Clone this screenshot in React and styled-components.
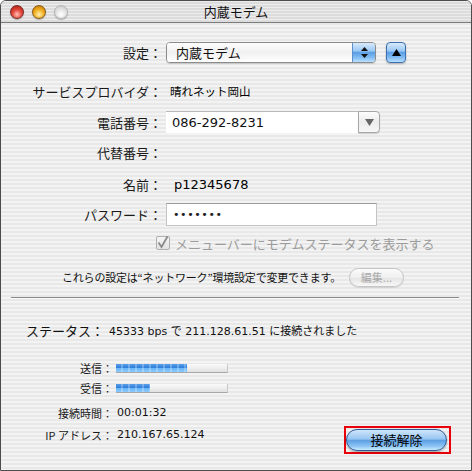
import React from 'react';
import styled, { createGlobalStyle } from 'styled-components';

const GlobalStyle = createGlobalStyle`
  html, body {
    margin: 0;
    padding: 0;
    background: #fff;
  }
  body {
    font-family: "Noto Sans CJK JP", "Noto Sans", sans-serif;
    color: #111;
  }
`;

const pinstripe = `repeating-linear-gradient(to bottom, #f3f3f3 0px, #f3f3f3 2px, #e8e8e8 2px, #e8e8e8 4px)`;

const LATIN = `"DejaVu Sans", "Noto Sans CJK JP", sans-serif`;

const aquaBlue = `linear-gradient(to bottom, #d8eafc 0%, #9ac8f4 42%, #5d9fe6 50%, #7fbaf2 75%, #b9e0ff 100%)`;

const traffic = {
  red: { light: '#ffc2b8', mid: '#e5483c', dark: '#9c1a10', ring: '#7b2a22' },
  yellow: { light: '#fff0b8', mid: '#f3b224', dark: '#b86c00', ring: '#8a5a14' },
  gray: { light: '#ffffff', mid: '#e6e6e6', dark: '#c2c2c2', ring: '#b4b4b4' },
};

const sending = [
  { label: '送信：', value: 64 },
  { label: '受信：', value: 31 },
];

function App() {
  return (
    <>
      <GlobalStyle />
      <Window>
        <TitleBar>
          <Lights>
            <Light $c="red" />
            <Light $c="yellow" />
            <Light $c="gray" />
          </Lights>
          <Title>内蔵モデム</Title>
          <span />
        </TitleBar>

        <Body>
          <FormRow $gap={18}>
            <Label>設定：</Label>
            <Field>
              <Popup>
                <PopupText>内蔵モデム</PopupText>
                <PopupArrows>
                  <svg width="7" height="11" viewBox="0 0 7 11">
                    <path d="M3.5 0 L7 4 L0 4 Z" fill="#111" />
                    <path d="M0 7 L7 7 L3.5 11 Z" fill="#111" />
                  </svg>
                </PopupArrows>
              </Popup>
              <UpButton>
                <svg width="9" height="7" viewBox="0 0 9 7">
                  <path d="M4.5 0 L9 7 L0 7 Z" fill="#000" />
                </svg>
              </UpButton>
            </Field>
          </FormRow>

          <FormRow $gap={17}>
            <Label>サービスプロバイダ：</Label>
            <Value $pad={4} $size={11.5}>晴れネット岡山</Value>
          </FormRow>

          <FormRow $gap={9}>
            <Label>電話番号：</Label>
            <Field>
              <Combo>
                <ComboText>086-292-8231</ComboText>
                <ComboButton>
                  <svg width="9" height="7" viewBox="0 0 9 7">
                    <path d="M0 0 L9 0 L4.5 7 Z" fill="#666" />
                  </svg>
                </ComboButton>
              </Combo>
            </Field>
          </FormRow>

          <FormRow $gap={8}>
            <Label>代替番号：</Label>
            <span />
          </FormRow>

          <FormRow $gap={10}>
            <Label>名前：</Label>
            <Value $pad={8} $size={13} $latin>p12345678</Value>
          </FormRow>

          <FormRow $gap={8}>
            <Label>パスワード：</Label>
            <Field>
              <TextField>•••••••</TextField>
            </Field>
          </FormRow>

          <CheckRow>
            <CheckBox>
              <svg width="12" height="13" viewBox="0 0 12 13">
                <path d="M1.5 6.5 L4.5 11 L10.5 0.5" stroke="#8a8a8a" strokeWidth="1.8" fill="none" />
              </svg>
            </CheckBox>
            <CheckText>メニューバーにモデムステータスを表示する</CheckText>
          </CheckRow>

          <NoteRow>
            <Note>これらの設定は“ネットワーク”環境設定で変更できます。</Note>
            <EditButton>編集...</EditButton>
          </NoteRow>

          <Separator />

          <StatusRow>
            <StatusLabel>ステータス：</StatusLabel>
            <StatusText>45333 bps で 211.128.61.51 に接続されました</StatusText>
          </StatusRow>

          {sending.map((s, i) => (
            <InfoRow key={s.label} $gap={i === 0 ? 17 : 0}>
              <InfoLabel>{s.label}</InfoLabel>
              <Bar>
                <BarFill style={{ width: `${s.value}%` }} />
              </Bar>
            </InfoRow>
          ))}

          <InfoRow $gap={5}>
            <InfoLabel>接続時間：</InfoLabel>
            <InfoValue>00:01:32</InfoValue>
          </InfoRow>

          <InfoRow $gap={2}>
            <InfoLabel>IP アドレス：</InfoLabel>
            <InfoValue>210.167.65.124</InfoValue>
            <Highlight>
              <AquaButton>接続解除</AquaButton>
            </Highlight>
          </InfoRow>
        </Body>
      </Window>
    </>
  );
}

const Window = styled.div`
  width: 472px;
  height: 471px;
  box-sizing: border-box;
  border: 1px solid #4c4c4c;
  border-radius: 6px 6px 0 0;
  overflow: hidden;
  display: flex;
  flex-direction: column;
  background: ${pinstripe};
`;

const TitleBar = styled.div`
  height: 21px;
  border-bottom: 1px solid #7c7c7c;
  display: grid;
  grid-template-columns: 1fr auto 1fr;
  align-items: center;
  background: repeating-linear-gradient(to bottom, #ededed 0px, #ededed 1px, #dcdcdc 1px, #dcdcdc 3px);
`;

const Lights = styled.div`
  display: flex;
  gap: 8px;
  padding-left: 9px;
`;

const Light = styled.div`
  width: 14px;
  height: 14px;
  box-sizing: border-box;
  border-radius: 50%;
  border: 1px solid ${(p) => traffic[p.$c].ring};
  background: radial-gradient(circle at 50% 70%, ${(p) => traffic[p.$c].light} 0%, ${(p) => traffic[p.$c].mid} 45%, ${(p) => traffic[p.$c].dark} 100%);
  box-shadow: 0 1px 1px rgba(0, 0, 0, 0.25);
`;

const Title = styled.div`
  font-size: 13px;
  color: #111;
  line-height: 21px;
`;

const Body = styled.div`
  flex: 1;
  display: flex;
  flex-direction: column;
`;

const FormRow = styled.div`
  display: grid;
  grid-template-columns: 161px 1fr;
  column-gap: 4px;
  align-items: center;
  height: 22px;
  margin-top: ${(p) => p.$gap || 0}px;
`;

const Label = styled.div`
  text-align: right;
  font-size: 13px;
  white-space: nowrap;
  color: #1a1a1a;
`;

const Value = styled.div`
  padding-left: ${(p) => p.$pad}px;
  font-size: ${(p) => p.$size}px;
  font-family: ${(p) => (p.$latin ? LATIN : 'inherit')};
  color: #000;
`;

const Field = styled.div`
  display: flex;
  align-items: center;
`;

const Popup = styled.div`
  width: 210px;
  height: 21px;
  box-sizing: border-box;
  display: flex;
  border: 1px solid #8c8c8c;
  border-radius: 4px;
  overflow: hidden;
  box-shadow: 0 1px 1px rgba(0, 0, 0, 0.15);
`;

const PopupText = styled.div`
  flex: 1;
  padding-left: 9px;
  font-size: 13px;
  line-height: 19px;
  background: linear-gradient(to bottom, #fdfdfd 0%, #f1f1f1 50%, #ffffff 100%);
`;

const PopupArrows = styled.div`
  width: 22px;
  display: flex;
  align-items: center;
  justify-content: center;
  background: ${aquaBlue};
  border-left: 1px solid #5b8fd0;
`;

const UpButton = styled.div`
  margin-left: 10px;
  width: 20px;
  height: 21px;
  box-sizing: border-box;
  border: 1px solid #3d6eb0;
  border-radius: 4px;
  background: ${aquaBlue};
  display: flex;
  align-items: center;
  justify-content: center;
  box-shadow: 0 1px 2px rgba(0, 0, 0, 0.25);
`;

const Combo = styled.div`
  width: 214px;
  height: 22px;
  display: flex;
`;

const ComboText = styled.div`
  flex: 1;
  background: #fff;
  border-top: 1px solid #b8b8b8;
  padding-left: 6px;
  font-family: ${LATIN};
  font-size: 13px;
  line-height: 21px;
  color: #111;
`;

const ComboButton = styled.div`
  width: 22px;
  box-sizing: border-box;
  border: 1px solid #a6a6a6;
  border-radius: 0 4px 4px 0;
  background: linear-gradient(to bottom, #fdfdfd 0%, #ececec 50%, #f7f7f7 100%);
  display: flex;
  align-items: center;
  justify-content: center;
  box-shadow: 0 1px 1px rgba(0, 0, 0, 0.15);
`;

const TextField = styled.div`
  width: 211px;
  height: 23px;
  box-sizing: border-box;
  background: #fff;
  border: 1px solid #c4c4c4;
  border-top-color: #9a9a9a;
  padding-left: 6px;
  font-family: ${LATIN};
  font-size: 11px;
  letter-spacing: 0.6px;
  line-height: 21px;
  color: #222;
`;

const CheckRow = styled.div`
  display: flex;
  align-items: center;
  gap: 5px;
  padding-left: 155px;
  height: 22px;
  margin-top: 7px;
`;

const CheckBox = styled.div`
  width: 14px;
  height: 14px;
  box-sizing: border-box;
  border: 1px solid #b0b0b0;
  border-radius: 2px;
  background: linear-gradient(to bottom, #f6f6f6, #e2e2e2);
  display: flex;
  align-items: flex-end;
  justify-content: center;
  overflow: visible;
`;

const CheckText = styled.div`
  font-size: 13px;
  color: #9c9c9c;
`;

const NoteRow = styled.div`
  display: flex;
  align-items: center;
  gap: 8px;
  padding-left: 61px;
  height: 22px;
  margin-top: 12px;
`;

const Note = styled.div`
  font-size: 11px;
  letter-spacing: -0.2px;
  color: #111;
`;

const EditButton = styled.div`
  width: 55px;
  height: 19px;
  box-sizing: border-box;
  border: 1px solid #c6c6c6;
  border-radius: 10px;
  background: linear-gradient(to bottom, #fcfcfc 0%, #efefef 50%, #e4e4e4 51%, #f7f7f7 100%);
  font-size: 11px;
  line-height: 17px;
  text-align: center;
  color: #a8a8a8;
  box-shadow: 0 1px 1px rgba(0, 0, 0, 0.1);
`;

const Separator = styled.div`
  margin: 9px 12px 0 10px;
  height: 1px;
  background: #8a8a8a;
  box-shadow: 0 1px 0 #fafafa;
`;

const StatusRow = styled.div`
  display: flex;
  align-items: center;
  height: 22px;
  margin-top: 21px;
  padding-left: 25px;
`;

const StatusLabel = styled.div`
  font-size: 13px;
  width: 83px;
  white-space: nowrap;
`;

const StatusText = styled.div`
  font-family: ${LATIN};
  font-size: 11px;
  white-space: nowrap;
  color: #111;
`;

const InfoRow = styled.div`
  display: flex;
  align-items: flex-start;
  margin-top: ${(p) => p.$gap}px;
  padding-right: 20px;
`;

const InfoLabel = styled.div`
  width: 112px;
  height: 20px;
  line-height: 20px;
  text-align: right;
  font-size: 11px;
  white-space: nowrap;
  color: #1a1a1a;
`;

const InfoValue = styled.div`
  margin-left: 4px;
  height: 20px;
  line-height: 20px;
  font-family: ${LATIN};
  font-size: 11px;
  color: #111;
`;

const Bar = styled.div`
  margin: 6px 0 0 3px;
  width: 112px;
  height: 9px;
  box-sizing: border-box;
  background: linear-gradient(to bottom, #fafafa 0%, #ececec 60%, #e0e0e0 100%);
  border-bottom: 1px solid #a8a8a8;
  border-right: 1px solid #c8c8c8;
  overflow: hidden;
`;

const BarFill = styled.div`
  height: 100%;
  background:
    repeating-linear-gradient(to right, rgba(255, 255, 255, 0) 0px, rgba(255, 255, 255, 0) 5px, rgba(255, 255, 255, 0.25) 5px, rgba(255, 255, 255, 0.25) 7px),
    linear-gradient(to bottom, #5a9ee8 0%, #2f7fdc 45%, #6bb6f8 55%, #8ccaff 100%);
`;

const Highlight = styled.div`
  margin: 1px 0 0 auto;
  border: 2px solid #e8000b;
  padding: 1px 2px 1px 0;
`;

const AquaButton = styled.div`
  width: 101px;
  height: 22px;
  box-sizing: border-box;
  border: 1px solid #2f5a94;
  border-radius: 11px;
  background: linear-gradient(to bottom, #cfe5fb 0%, #97c6f2 45%, #5e9fe4 52%, #86bff2 78%, #c6ecff 100%);
  font-size: 13px;
  line-height: 20px;
  text-align: center;
  color: #000;
  box-shadow: 0 1px 2px rgba(0, 0, 0, 0.35);
`;

export default App;
